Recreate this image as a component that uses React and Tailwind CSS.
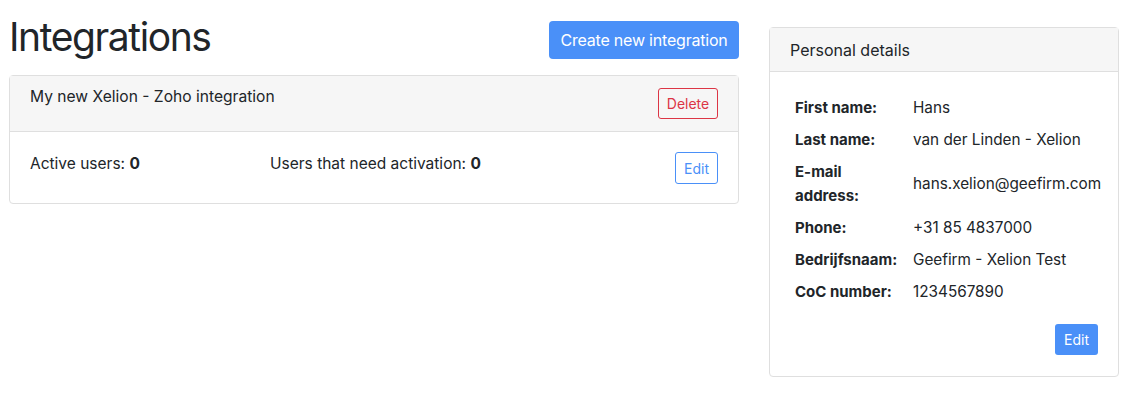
export default function App() {
  const rows = [
    ["First name:", "Hans"],
    ["Last name:", "van der Linden - Xelion"],
    ["E-mail address:", "hans.xelion@geefirm.com"],
    ["Phone:", "+31 85 4837000"],
    ["Bedrijfsnaam:", "Geefirm - Xelion Test"],
    ["CoC number:", "1234567890"],
  ];
  return (
    <div className="w-[1130px] h-[393px] bg-white text-[#212529] flex pl-[9px] pr-[11px]" style={{ fontFamily: "Inter, 'Noto Sans', sans-serif" }}>
      <div className="w-[730px] flex flex-col">
        <div className="flex justify-between items-start h-[75px]">
          <h1 className="text-[39px] leading-[48px] mt-[13px] tracking-[-1.4px] font-normal">Integrations</h1>
          <button className="mt-[21px] h-[38px] w-[190px] rounded-[4px] bg-[#4a90f8] text-white text-[16px] tracking-[-0.2px]">Create new integration</button>
        </div>
        <div className="border border-[#dfdfdf] rounded-[4px]">
          <div className="h-[56px] bg-[#f6f6f6] border-b border-[#dfdfdf] flex justify-between items-start px-[20px]">
            <div className="text-[15.6px] leading-[24px] mt-[9px]">My new Xelion - Zoho integration</div>
            <button className="mt-[12px] h-[31px] w-[60px] rounded-[3px] border border-[#dc3545] text-[#dc3545] text-[14px]">Delete</button>
          </div>
          <div className="h-[71px] flex items-start px-[20px]">
            <div className="w-[240px] text-[15.5px] leading-[24px] mt-[20px]">Active users: <b>0</b></div>
            <div className="flex-1 text-[15.5px] leading-[24px] mt-[20px]">Users that need activation: <b>0</b></div>
            <button className="mt-[20px] h-[32px] w-[43px] rounded-[3px] border border-[#4a90f8] text-[#4a90f8] text-[14px]">Edit</button>
          </div>
        </div>
      </div>
      <div className="ml-[30px] w-[350px] flex flex-col pt-[27px]">
        <div className="border border-[#dfdfdf] rounded-[4px] h-[350px] flex flex-col">
          <div className="h-[44px] bg-[#f6f6f6] border-b border-[#dfdfdf] px-[20px] flex items-center text-[16px] pt-[1px]">Personal details</div>
          <div className="px-[25px] pt-[20px] flex flex-col">
            {rows.map(([k, v]) => (
              <div key={k} className="flex items-center py-[4px] text-[15.3px] leading-[24px]">
                <div className="w-[118px] shrink-0 font-bold pr-[8px] text-[15px]">{k}</div>
                <div className="whitespace-nowrap">{v}</div>
              </div>
            ))}
            <div className="flex justify-end mt-[16px] -mr-[5px]">
              <button className="h-[31px] w-[43px] rounded-[3px] bg-[#4a90f8] text-white text-[14px]">Edit</button>
            </div>
          </div>
        </div>
      </div>
    </div>
  );
}
